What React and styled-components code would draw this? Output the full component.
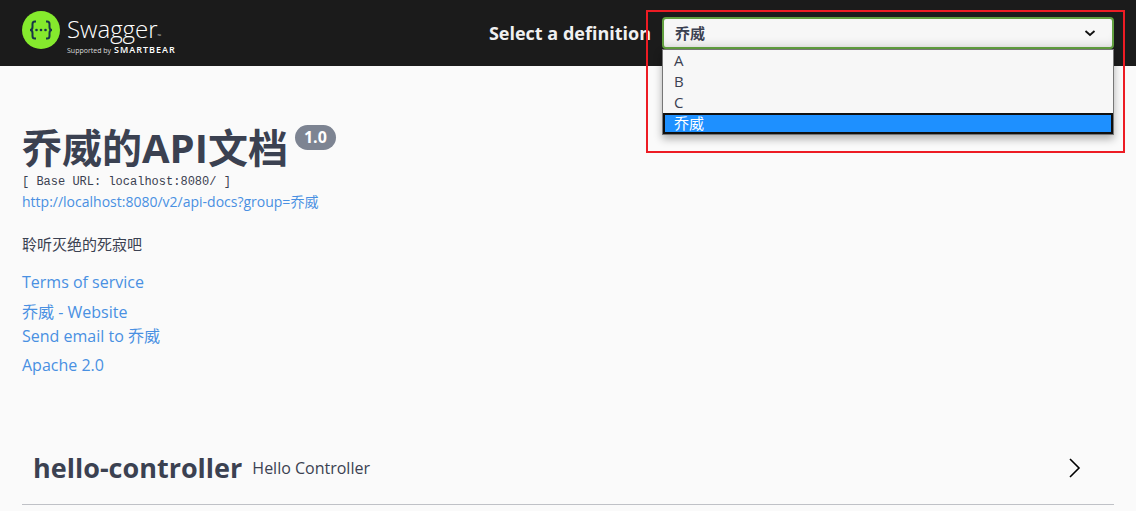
import React, { useState } from "react";
import styled, { createGlobalStyle } from "styled-components";

const GlobalStyle = createGlobalStyle`
  * { box-sizing: border-box; }
  body {
    margin: 0;
    background: #fafafa;
    color: #3b4151;
    font-family: "Open Sans", "Noto Sans CJK SC", sans-serif;
    font-size: 15px;
  }
`;

const Topbar = styled.header`
  display: flex;
  align-items: center;
  justify-content: space-between;
  height: 66px;
  padding: 0 22px;
  background: #1b1b1b;
`;

const Brand = styled.a`
  display: flex;
  gap: 7px;
  height: 46px;
  color: #fff;
  text-decoration: none;
`;

const BrandMark = styled.svg`
  flex: none;
  width: 38px;
  height: 38px;
  margin-top: 1px;
`;

const BrandText = styled.span`
  display: flex;
  flex-direction: column;
`;

const BrandName = styled.span`
  height: 35px;
  font-size: 24px;
  font-weight: 300;
  line-height: 38px;
  white-space: nowrap;

  small {
    font-size: 5px;
  }
`;

const BrandTagline = styled.span`
  display: flex;
  align-items: baseline;
  gap: 3px;
  color: #ddd;
  font-size: 7px;
  line-height: 10px;
  white-space: nowrap;

  b {
    color: #fff;
    font-size: 9px;
    font-weight: 600;
    letter-spacing: 1px;
  }
`;

const Picker = styled.div`
  display: flex;
  flex: 0 1 640px;
  align-items: center;
  justify-content: flex-end;
  gap: 11px;
`;

const PickerLabel = styled.label`
  color: #f0f0f0;
  font-size: 18px;
  font-weight: 700;
  white-space: nowrap;
`;

const SelectBox = styled.div`
  position: relative;
  flex: 0 1 452px;
`;

const Select = styled.select`
  display: block;
  width: 100%;
  height: 32px;
  padding: 0 40px 0 11px;
  appearance: none;
  border: 2px solid #62a03f;
  border-radius: 4px;
  outline: none;
  background: #f7f7f7;
  box-shadow: inset 0 -8px 10px -6px rgba(0, 0, 0, 0.12);
  color: #3b4151;
  font: 700 15px "Open Sans", "Noto Sans CJK SC", sans-serif;
`;

const SelectArrow = styled.svg`
  position: absolute;
  top: 11px;
  right: 18px;
  width: 12px;
  height: 10px;
  pointer-events: none;
`;

const Options = styled.ul`
  position: absolute;
  top: 100%;
  right: 0;
  left: 0;
  z-index: 1;
  margin: 0;
  padding: 0;
  border: 1px solid #767676;
  background: #f7f7f7;
  box-shadow: 0 4px 8px rgba(0, 0, 0, 0.3);
  list-style: none;
`;

const Option = styled.li`
  height: 21px;
  padding: 0 9px;
  border: 2px solid ${(p) => (p["aria-selected"] ? "#101010" : "transparent")};
  background: ${(p) => (p["aria-selected"] ? "#1e90ff" : "transparent")};
  color: ${(p) => (p["aria-selected"] ? "#fff" : "#3b4151")};
  line-height: 17px;
  cursor: default;
`;

const Highlight = styled.div`
  position: absolute;
  top: -7px;
  right: -11px;
  bottom: -104px;
  left: -16px;
  z-index: 2;
  border: 2px solid #ed1c24;
  pointer-events: none;
`;

const Page = styled.main`
  padding: 56px 22px 0;
`;

const Info = styled.section`
  display: flex;
  flex-direction: column;
  align-items: flex-start;
`;

const Title = styled.h1`
  display: flex;
  align-items: flex-start;
  gap: 7px;
  margin: 0;
  font-size: 40px;
  font-weight: 700;
  line-height: 52px;
`;

const Version = styled.span`
  height: 25px;
  margin-top: 3px;
  padding: 0 9px;
  border-radius: 13px;
  background: #7d8492;
  color: #fff;
  font-size: 16px;
  line-height: 25px;
`;

const BaseUrl = styled.pre`
  margin: 0;
  font-family: "Liberation Mono", monospace;
  font-size: 12px;
  line-height: 16px;
`;

const Link = styled.a`
  color: #4990e2;
  font-size: ${(p) => (p.$small ? "14px" : "16px")};
  line-height: 24px;
  text-decoration: none;
`;

const Description = styled.p`
  margin: 18px 0 14px;
  line-height: 24px;
`;

const Contact = styled.div`
  display: flex;
  flex-direction: column;
  align-items: flex-start;
  margin: 6px 0 5px;
`;

const Tag = styled.section`
  margin-top: 54px;
  border-bottom: 1px solid #bfc1c6;
`;

const TagHeader = styled.h2`
  display: flex;
  align-items: center;
  gap: 10px;
  height: 73px;
  margin: 0;
  padding: 0 32px 0 11px;
  font-size: 27px;
  line-height: 36px;
`;

const TagDescription = styled.small`
  flex: 1;
  font-size: 16px;
  font-weight: 400;
`;

const ExpandButton = styled.button`
  display: flex;
  padding: 0;
  border: 0;
  background: none;
`;

const definitions = ["A", "B", "C", "乔威"];

export default function App() {
  const [selected, setSelected] = useState("乔威");

  return (
    <>
      <GlobalStyle />
      <Topbar>
        <Brand href="#">
          <BrandMark viewBox="0 0 38 38" aria-hidden="true">
            <circle cx="19" cy="19" r="19" fill="#85ea2d" />
            <g fill="none" stroke="#173647" strokeWidth="2">
              <path d="M14 10.5h-1.2c-1.7 0-2.3.9-2.3 2.5v3c0 1.8-.8 3-2.5 3 1.7 0 2.5 1.2 2.5 3v3c0 1.600.6 2.500 2.300 2.500H14" />
              <path d="M24 10.5h1.2c1.7 0 2.3.9 2.3 2.5v3c0 1.800.8 3 2.500 3-1.700 0-2.500 1.200-2.500 3v3c0 1.600-.6 2.500-2.300 2.500H24" />
            </g>
            <g fill="#173647">
              <circle cx="14.5" cy="19" r="1.3" />
              <circle cx="19" cy="19" r="1.3" />
              <circle cx="23.5" cy="19" r="1.3" />
            </g>
          </BrandMark>
          <BrandText>
            <BrandName>Swagger<small>™</small></BrandName>
            <BrandTagline>Supported by <b>SMARTBEAR</b></BrandTagline>
          </BrandText>
        </Brand>
        <Picker>
          <PickerLabel htmlFor="definition">Select a definition</PickerLabel>
          <SelectBox>
            <Select
              id="definition"
              value={selected}
              onChange={(e) => setSelected(e.target.value)}
            >
              {definitions.map((name) => (
                <option key={name}>{name}</option>
              ))}
            </Select>
            <SelectArrow viewBox="0 0 12 10" aria-hidden="true">
              <path d="M1.5 3 6 7l4.5-4" fill="none" stroke="#111" strokeWidth="1.8" />
            </SelectArrow>
            <Options role="listbox" aria-label="Definitions">
              {definitions.map((name) => (
                <Option
                  key={name}
                  role="option"
                  aria-selected={name === selected}
                  onClick={() => setSelected(name)}
                >
                  {name}
                </Option>
              ))}
            </Options>
            <Highlight />
          </SelectBox>
        </Picker>
      </Topbar>
      <Page>
        <Info>
          <Title>
            乔威的API文档
            <Version>1.0</Version>
          </Title>
          <BaseUrl>[ Base URL: localhost:8080/ ]</BaseUrl>
          <Link $small href="#docs">http://localhost:8080/v2/api-docs?group=乔威</Link>
          <Description>聆听灭绝的死寂吧</Description>
          <Link href="#terms">Terms of service</Link>
          <Contact>
            <Link href="#website">乔威 - Website</Link>
            <Link href="#email">Send email to 乔威</Link>
          </Contact>
          <Link href="#license">Apache 2.0</Link>
        </Info>
        <Tag>
          <TagHeader>
            <span>hello-controller</span>
            <TagDescription>Hello Controller</TagDescription>
            <ExpandButton type="button" aria-label="Expand operation">
              <svg width="16" height="20" viewBox="0 0 16 20">
                <path d="M4 1l9 9-9 9" fill="none" stroke="#000" strokeWidth="1.6" />
              </svg>
            </ExpandButton>
          </TagHeader>
        </Tag>
      </Page>
    </>
  );
}
